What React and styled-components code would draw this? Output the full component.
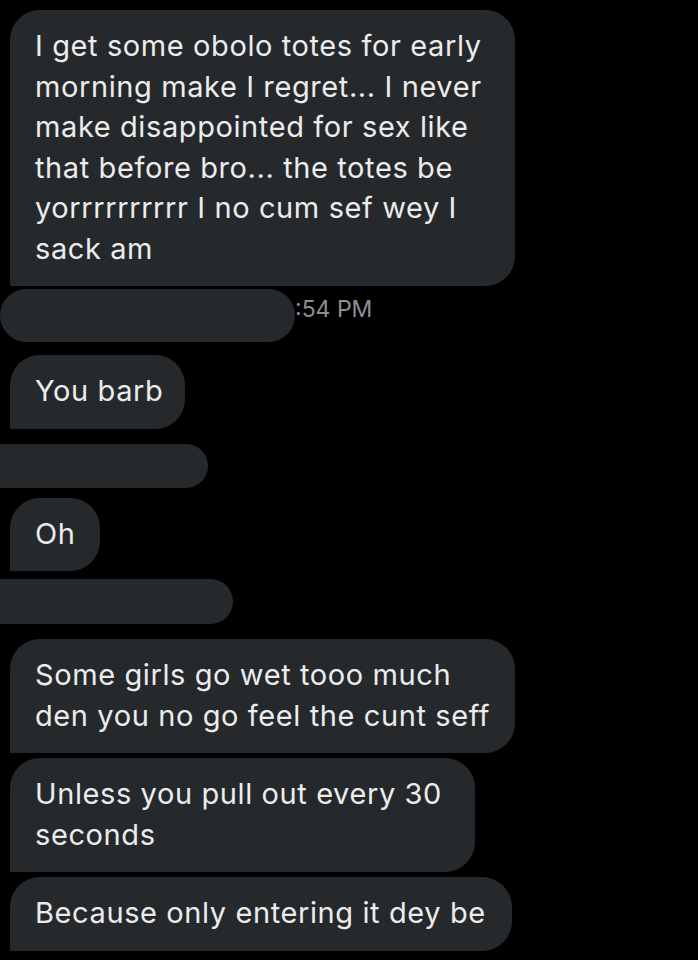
import React from "react";
import styled, { createGlobalStyle } from "styled-components";

const Global = createGlobalStyle`
html, body {
  margin: 0;
  padding: 0;
  background: #000;
}
body {
  font-family: Inter, 'Liberation Sans', Arial, sans-serif;
}
`

const messages = [
  {
    kind: "bubble",
    top: 10,
    width: 505,
    lines: [
      "I get some obolo totes for early",
      "morning make I regret... I never",
      "make disappointed for sex like",
      "that before bro... the totes be",
      "yorrrrrrrrrr I no cum sef wey I",
      "sack am",
    ],
  },
  { kind: "bar", top: 3, width: 295, round: true, time: ":54 PM" },
  { kind: "bubble", top: 13, width: 175, lines: ["You barb"] },
  { kind: "bar", top: 12, width: 208, height: 44, peek: "1:54 PM" },
  { kind: "bubble", top: 10, width: 90, lines: ["Oh"] },
  { kind: "bar", top: 8, width: 233, height: 45 },
  {
    kind: "bubble",
    top: 15,
    width: 505,
    lines: ["Some girls go wet tooo much", "den you no go feel the cunt seff"],
  },
  {
    kind: "bubble",
    top: 5,
    width: 465,
    lines: ["Unless you pull out every 30", "seconds"],
  },
  { kind: "bubble", top: 5, width: 502, lines: ["Because only entering it dey be"] },
]

const App = () => {
  return (
    <>
      <Global />
      <Screen>
        {messages.map((m, i) =>
          m.kind === "bubble" ? (
            <Bubble key={i} $top={m.top} $width={m.width}>
              {m.lines.map((l, j) => (
                <Line key={j}>{l}</Line>
              ))}
            </Bubble>
          ) : (
            <BarGroup key={i} $top={m.top}>
              {m.peek && (
                <Peek>
                  <span>{m.peek}</span>
                </Peek>
              )}
              <BarRow>
                <Redact $width={m.width} $height={m.height} $round={m.round} />
                {m.time && <Time>{m.time}</Time>}
              </BarRow>
            </BarGroup>
          )
        )}
      </Screen>
    </>
  )
}

const Screen = styled.div`
width: 698px;
height: 960px;
background: #000;
display: flex;
flex-direction: column;
align-items: flex-start;
overflow: hidden;
`

const Bubble = styled.div`
margin-top: ${({ $top }) => $top}px;
margin-left: 10px;
width: ${({ $width }) => $width}px;
box-sizing: border-box;
padding: 16px 20px 17px 25px;
background: #26292c;
border-radius: 30px 30px 30px 0;
color: #ececec;
font-size: 29px;
line-height: 40.5px;
letter-spacing: 0.6px;
`

const Line = styled.div`
white-space: nowrap;
`

const BarGroup = styled.div`
margin-top: ${({ $top }) => $top}px;
display: flex;
flex-direction: column;
`

const Peek = styled.div`
height: 3px;
overflow: hidden;
padding-left: 40px;
color: #5d6064;
font-size: 22px;
line-height: 22px;
letter-spacing: 3px;
`

const BarRow = styled.div`
display: flex;
align-items: flex-start;
`

const Redact = styled.div`
width: ${({ $width }) => $width}px;
height: ${({ $height }) => $height || 53}px;
background: #26292c;
border-radius: ${({ $round }) => ($round ? "27px" : "0 24px 24px 0")};
`

const Time = styled.span`
margin-top: 7px;
color: #8c8f92;
font-size: 23px;
line-height: 26px;
`

export default App
